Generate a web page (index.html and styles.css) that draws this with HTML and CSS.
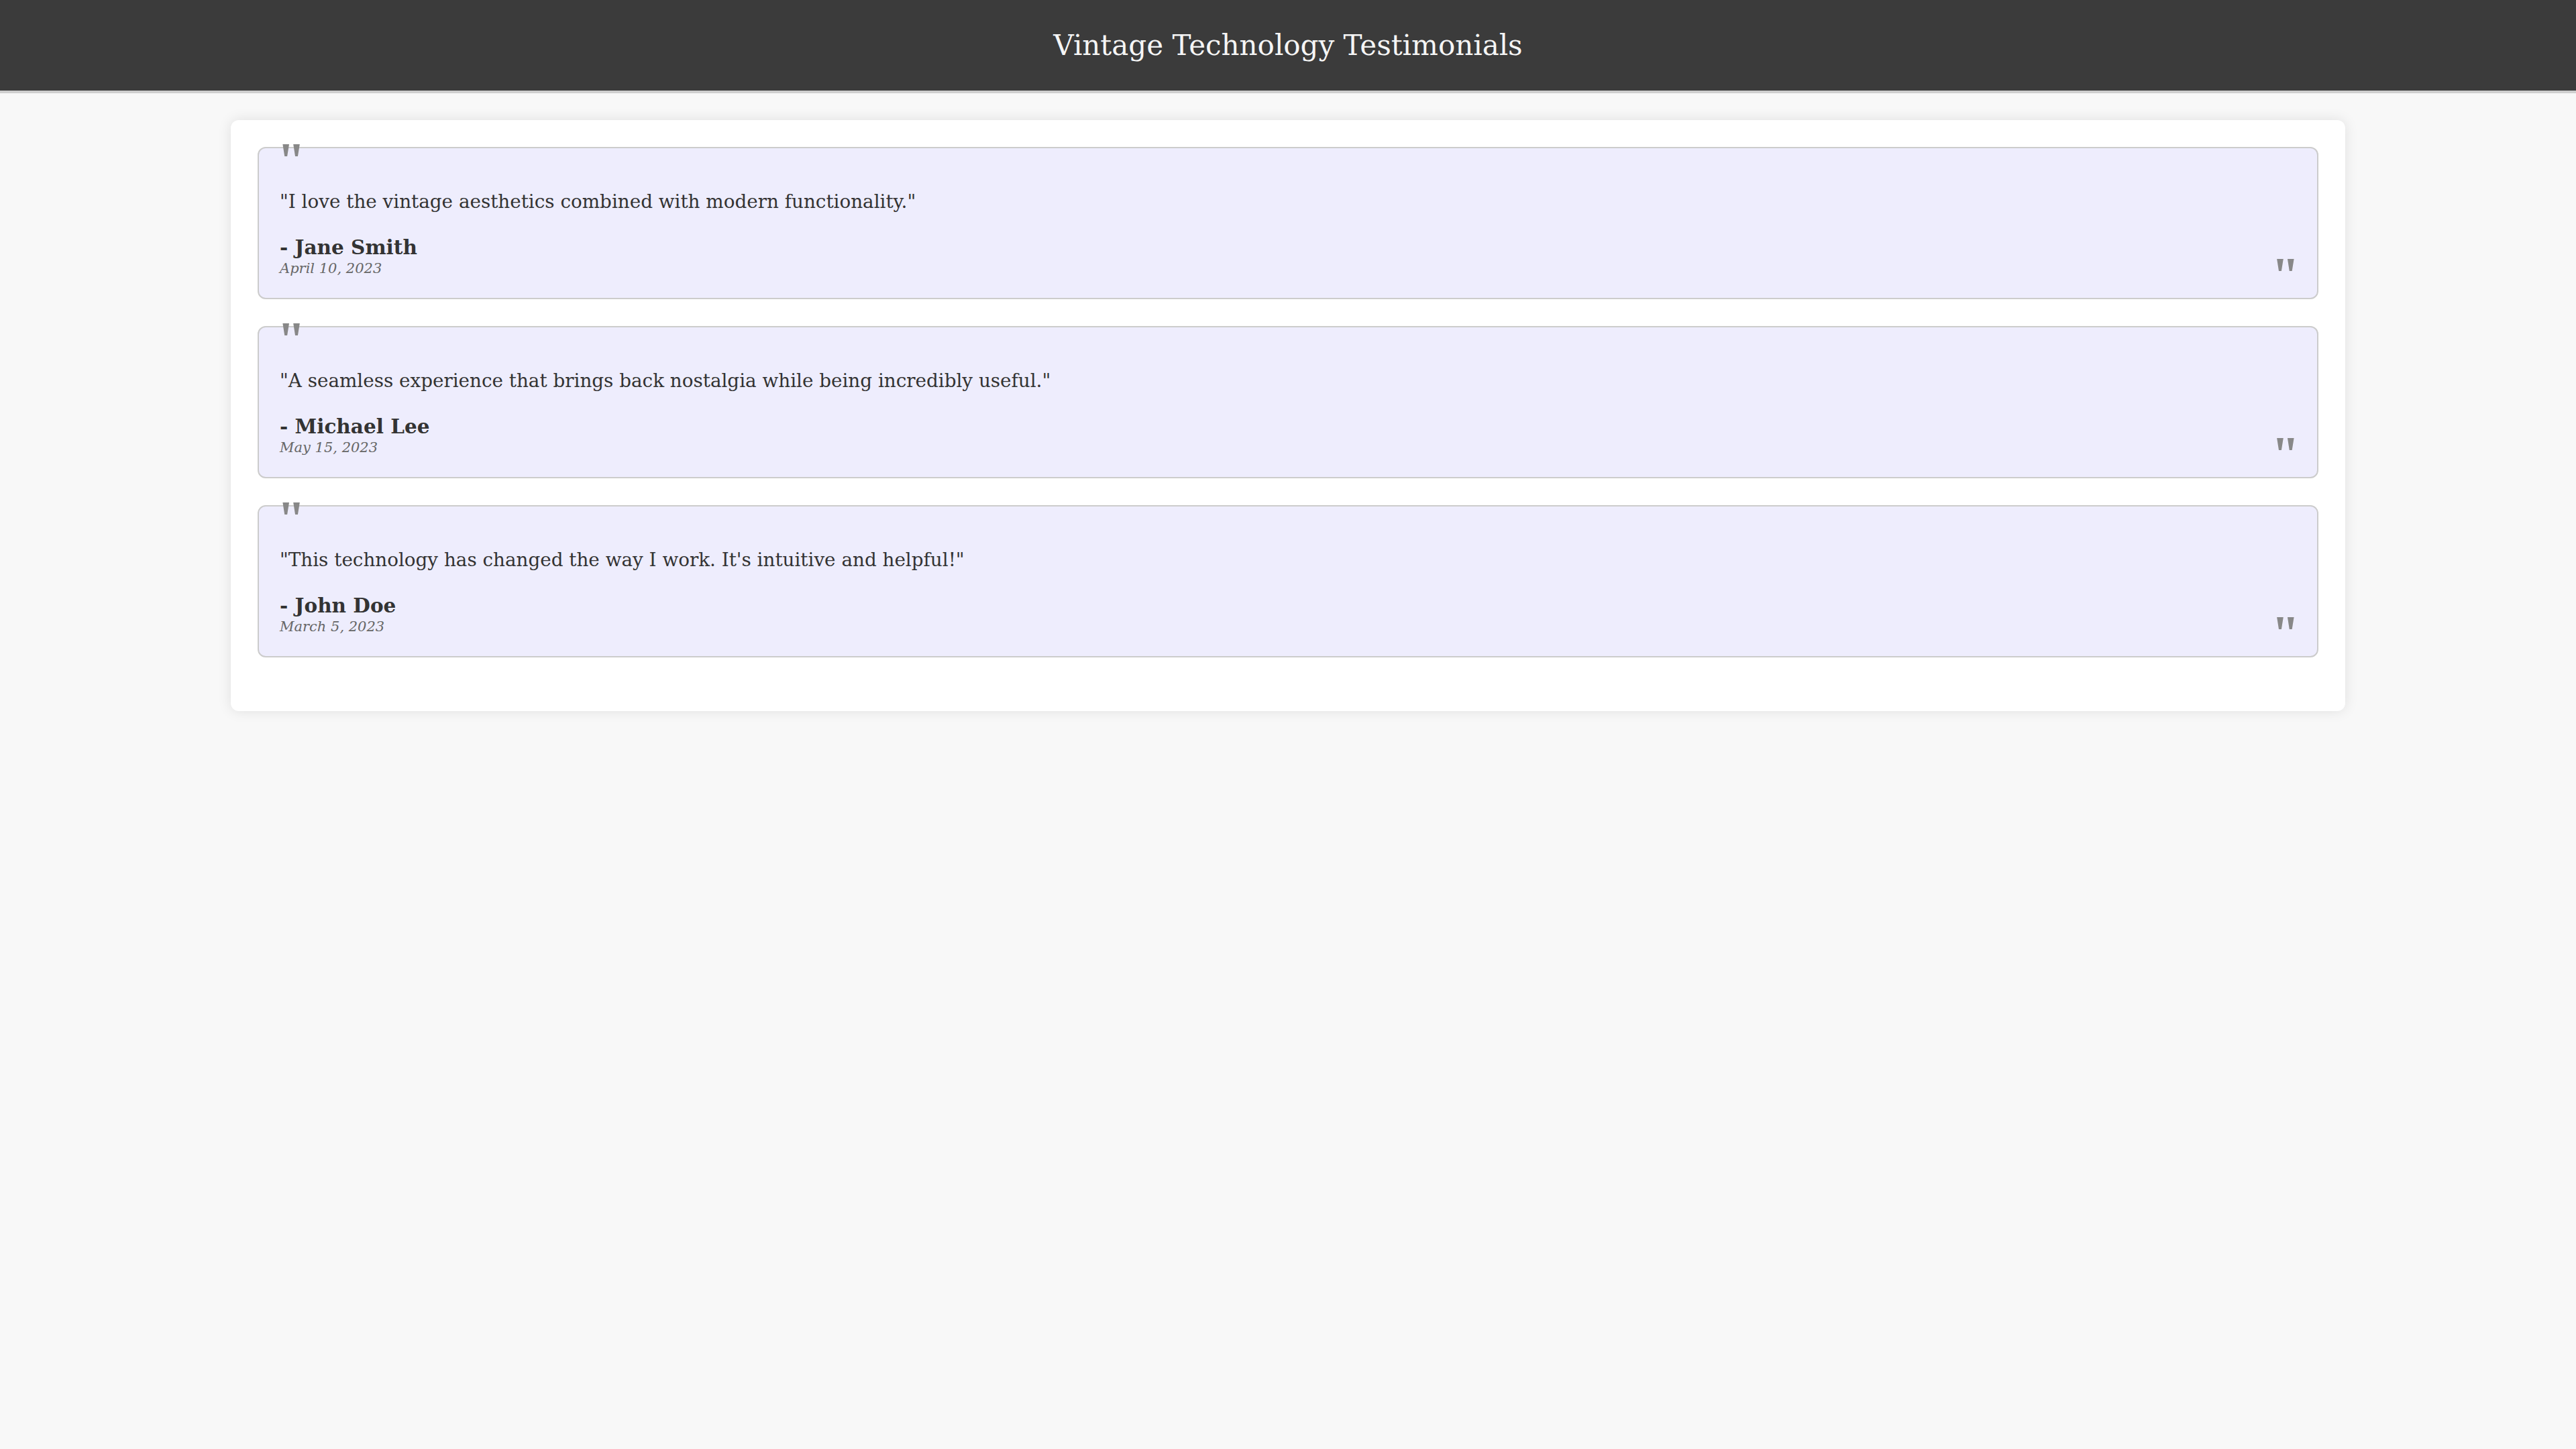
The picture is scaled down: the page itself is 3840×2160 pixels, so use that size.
FILE: index.html
```html
<!DOCTYPE html>
<html lang="en">
<head>
<meta charset="utf-8">
<title>Vintage Technology Testimonials</title>
<link rel="stylesheet" href="styles.css">
</head>
<body>
<header class="site-header">
  <h1 class="site-title">Vintage Technology Testimonials</h1>
</header>
<main class="container">
  <article class="testimonial">
    <span class="mark mark-open">"</span>
    <p class="quote-text">"I love the vintage aesthetics combined with modern functionality."</p>
    <p class="author">- Jane Smith</p>
    <p class="date">April 10, 2023</p>
    <span class="mark mark-close">"</span>
  </article>
  <article class="testimonial">
    <span class="mark mark-open">"</span>
    <p class="quote-text">"A seamless experience that brings back nostalgia while being incredibly useful."</p>
    <p class="author">- Michael Lee</p>
    <p class="date">May 15, 2023</p>
    <span class="mark mark-close">"</span>
  </article>
  <article class="testimonial">
    <span class="mark mark-open">"</span>
    <p class="quote-text">"This technology has changed the way I work. It's intuitive and helpful!"</p>
    <p class="author">- John Doe</p>
    <p class="date">March 5, 2023</p>
    <span class="mark mark-close">"</span>
  </article>
</main>
</body>
</html>
```

FILE: styles.css
```css
* { box-sizing: border-box; }

body {
  margin: 0;
  background: #f8f8f8;
  font-family: Georgia, "DejaVu Serif", serif;
  color: #333;
}

.site-header {
  background: #3b3b3b;
  border-bottom: 4px solid #cfcfcf;
  padding: 40px 0;
  text-align: center;
}

.site-title {
  margin: 0;
  font-weight: normal;
  font-size: 42px;
  line-height: 55px;
  color: #f5f5f5;
}

.container {
  width: 80%;
  margin: 40px auto;
  box-sizing: content-box;
  padding: 40px;
  background: #fff;
  border-radius: 12px;
  box-shadow: 0 0 20px rgba(0, 0, 0, 0.1);
}

.testimonial {
  position: relative;
  background: #eeedfd;
  border: 2px solid #cccccc;
  border-radius: 12px;
  padding: 32px 31px 32px;
  margin-bottom: 40px;
}

.quote-text {
  margin: 28px 0 30px;
  font-size: 27.8px;
  line-height: 40px;
  color: #333;
}

.author {
  margin: 0 0 1px;
  font-size: 29.5px;
  line-height: 36px;
  font-weight: bold;
  color: #333;
}

.date {
  margin: 0;
  font-size: 21px;
  line-height: 24px;
  font-style: italic;
  color: #666;
}

.mark {
  position: absolute;
  font-family: "Liberation Serif", serif;
  font-weight: bold;
  font-size: 76px;
  line-height: 1;
  color: #888;
}

.mark-open {
  top: -20px;
  left: 27px;
}

.mark-close {
  right: 26px;
  bottom: -4px;
}
```
